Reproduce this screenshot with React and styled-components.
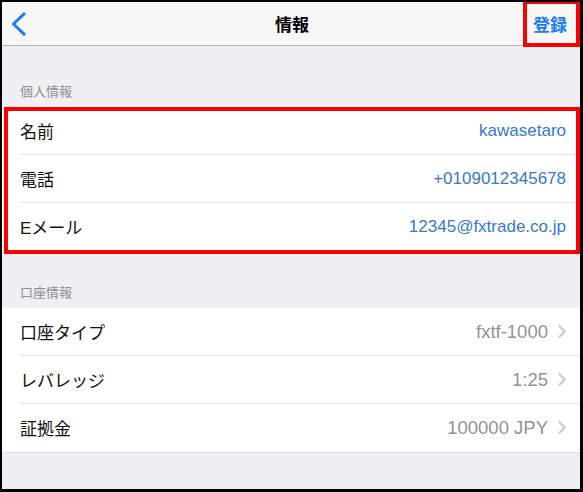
import React from "react";
import styled, { createGlobalStyle } from "styled-components";

const Global = createGlobalStyle`
  html, body { margin: 0; padding: 0; background: #000; }
  body { font-family: "Liberation Sans", "Noto Sans CJK JP", sans-serif; }
`;

const Frame = styled.div`
  position: relative;
  width: 583px;
  height: 492px;
  box-sizing: border-box;
  border-style: solid;
  border-color: #000;
  border-width: 2px 3px 3px 2px;
  background: #efeff4;
  display: flex;
  flex-direction: column;
  overflow: hidden;
`;

const NavBar = styled.div`
  position: relative;
  height: 43px;
  flex: none;
  background: #f7f7f7;
  border-bottom: 1px solid #b4b4b4;
  display: flex;
  align-items: center;
  justify-content: space-between;
  padding: 0 13px 0 9px;
`;

const BackButton = styled.div`
  display: flex;
  align-items: center;
  width: 60px;
`;

const Title = styled.div`
  position: absolute;
  left: 2px;
  right: 0;
  top: 0;
  bottom: 0;
  display: flex;
  align-items: center;
  justify-content: center;
  font-size: 17px;
  font-weight: bold;
  color: #000;
  pointer-events: none;
`;

const NavAction = styled.div`
  font-size: 17px;
  font-weight: bold;
  color: #1a7cf5;
`;

const SectionHeader = styled.div`
  height: ${(p) => (p.$first ? 61 : 56)}px;
  box-sizing: border-box;
  display: flex;
  align-items: flex-end;
  padding: 0 18px 7px;
  font-size: 13px;
  color: #8e8e93;
`;

const Group = styled.div`
  background: #fff;
  border-bottom: 1px solid #e2e2e6;
`;

const Row = styled.div`
  position: relative;
  height: 48px;
  box-sizing: border-box;
  display: flex;
  align-items: center;
  justify-content: space-between;
  padding: 0 14px 1px 18px;
  &:not(:last-child)::after {
    content: "";
    position: absolute;
    left: 18px;
    right: 0;
    bottom: 0;
    height: 1px;
    background: #e3e3e6;
  }
`;

const Label = styled.div`
  font-size: 17px;
  color: #111;
`;

const ValueWrap = styled.div`
  display: flex;
  align-items: center;
  gap: 10px;
`;

const Value = styled.div`
  font-size: ${(p) => (p.$link ? "17px" : "18.5px")};
  color: ${(p) => (p.$link ? "#3478d6" : "#939398")};
`;

const Highlight = styled.div`
  position: absolute;
  border: 4px solid #ff0000;
  box-sizing: border-box;
  pointer-events: none;
`;

const BackIcon = () => (
  <svg width="15" height="24" viewBox="0 0 15 24">
    <polyline
      points="13,1.8 2.5,12 13,22.2"
      fill="none"
      stroke="#1a7cf5"
      strokeWidth="3"
      strokeLinecap="round"
      strokeLinejoin="round"
    />
  </svg>
);

const Chevron = () => (
  <svg width="8" height="13" viewBox="0 0 8 13">
    <polyline
      points="1.2,1 6.8,6.5 1.2,12"
      fill="none"
      stroke="#c7c7cc"
      strokeWidth="1.8"
      strokeLinecap="round"
      strokeLinejoin="round"
    />
  </svg>
);

const personal = [
  { label: "名前", value: "kawasetaro" },
  { label: "電話", value: "+0109012345678" },
  { label: "Eメール", value: "12345@fxtrade.co.jp" },
];

const account = [
  { label: "口座タイプ", value: "fxtf-1000" },
  { label: "レバレッジ", value: "1:25" },
  { label: "証拠金", value: "100000 JPY" },
];

export default function App() {
  return (
    <>
      <Global />
      <Frame>
        <NavBar>
          <BackButton>
            <BackIcon />
          </BackButton>
          <Title>情報</Title>
          <NavAction>登録</NavAction>
        </NavBar>

        <SectionHeader $first>個人情報</SectionHeader>
        <Group>
          {personal.map((r) => (
            <Row key={r.label}>
              <Label>{r.label}</Label>
              <Value $link>{r.value}</Value>
            </Row>
          ))}
        </Group>

        <SectionHeader>口座情報</SectionHeader>
        <Group>
          {account.map((r) => (
            <Row key={r.label}>
              <Label>{r.label}</Label>
              <ValueWrap>
                <Value>{r.value}</Value>
                <Chevron />
              </ValueWrap>
            </Row>
          ))}
        </Group>

        <Highlight style={{ left: 521, top: -2, width: 57, height: 47 }} />
        <Highlight style={{ left: 2, top: 105, width: 576, height: 147 }} />
      </Frame>
    </>
  );
}
